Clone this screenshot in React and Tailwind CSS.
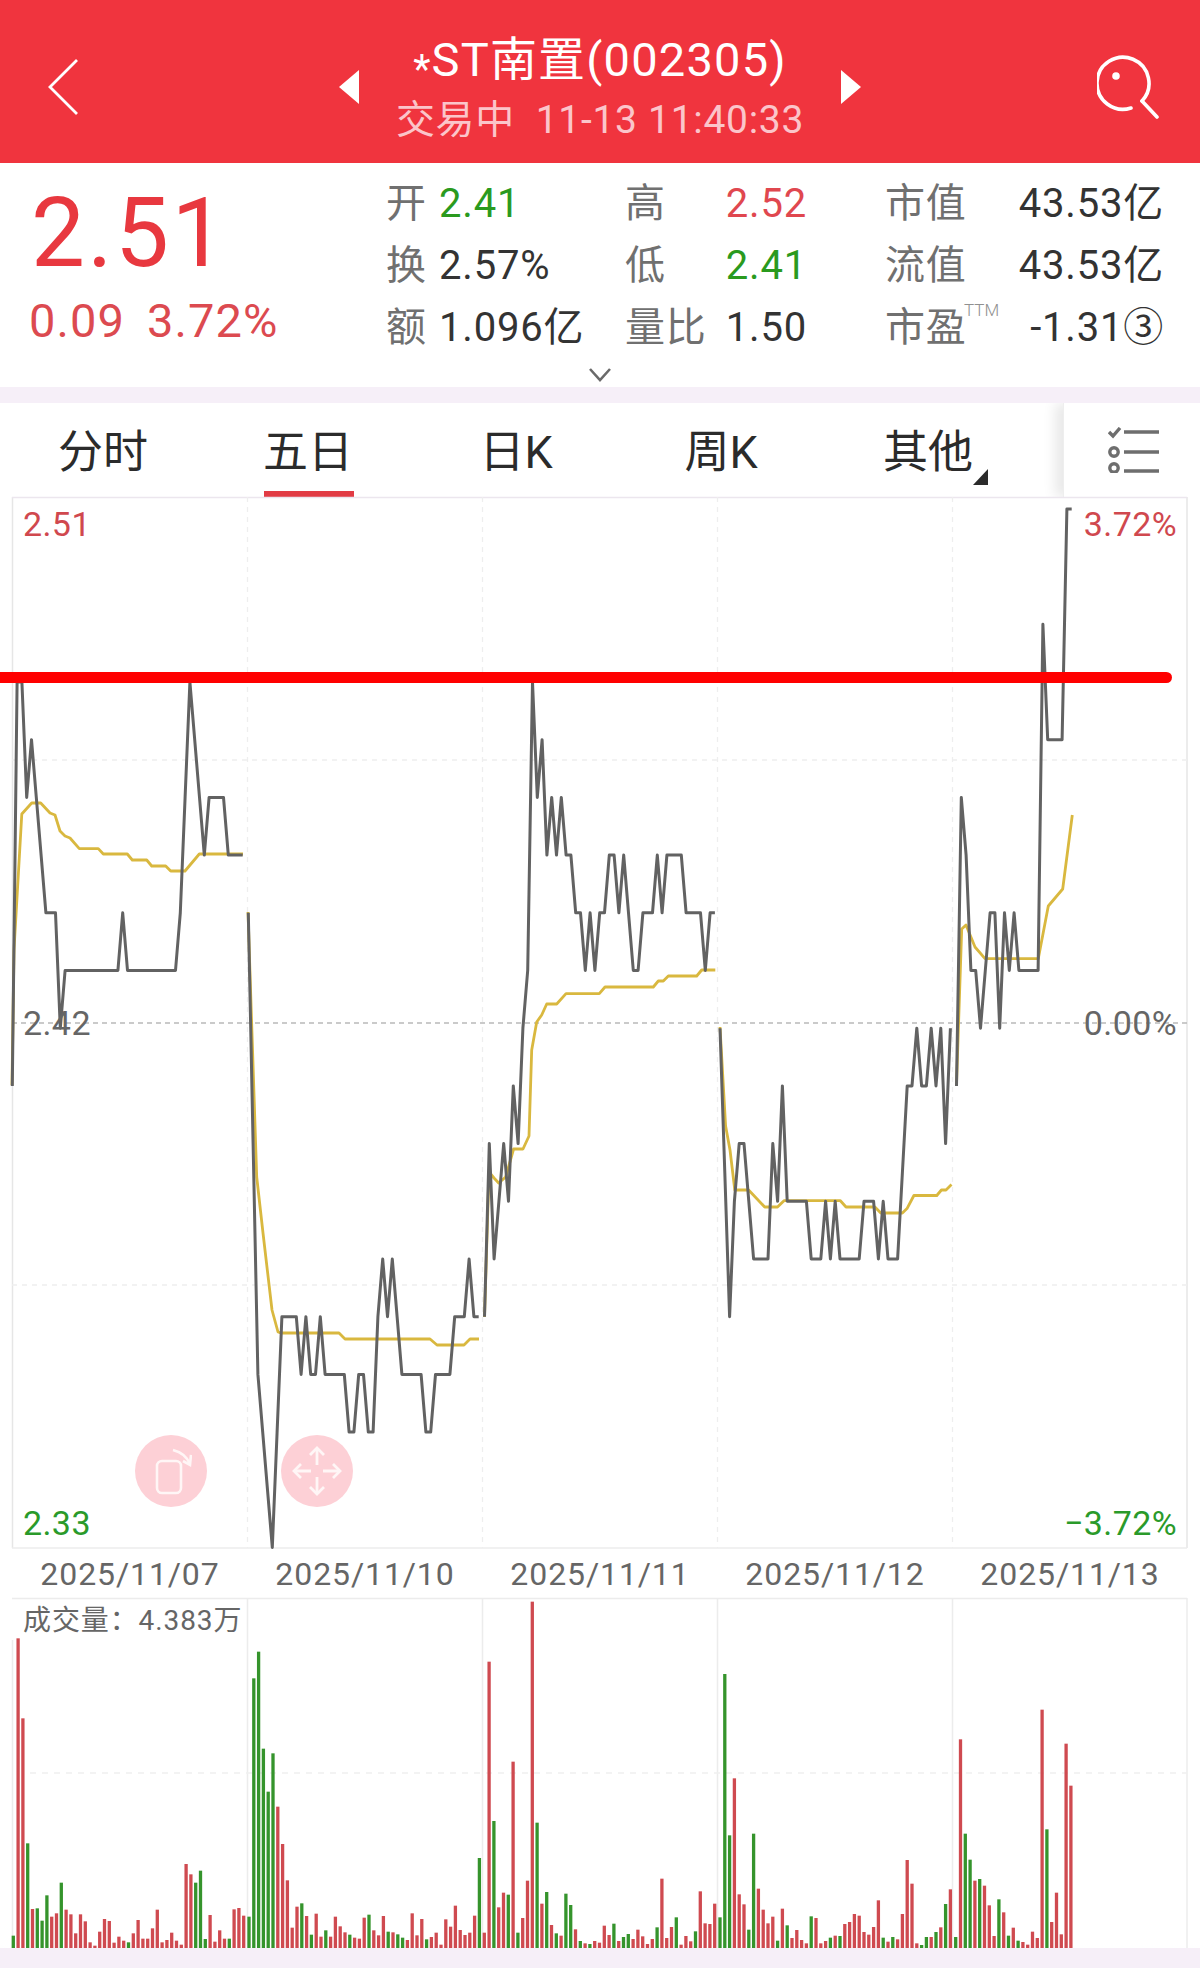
import React from "react";

const FONT = "[font-family:Roboto,'Noto_Sans_CJK_SC',sans-serif]";
const Y = (l) => 1547.5 - 57.7 * l;

const DAY_LINES = [
  { x0: 12.3, l: [8,15,15,13,14,13,12,11,11,11,9,10,10,10,10,10,10,10,10,10,10,10,10,11,10,10,10,10,10,10,10,10,10,10,10,11,13,15,14,13,12,13,13,13,13,12,12,12,12] },
  { x0: 248.3, l: [11,7,3,2,1,0,2,4,4,4,4,3,4,3,3,4,3,3,3,3,3,2,2,3,3,2,2,4,5,4,5,4,3,3,3,3,3,2,2,3,3,3,3,4,4,4,5,4,4] },
  { x0: 484.5, l: [4,7,5,6,7,6,8,7,9,10,15,13,14,12,13,12,13,12,12,11,11,10,11,10,11,11,12,12,11,12,11,10,10,11,11,11,12,11,12,12,12,12,11,11,11,11,10,11,11] },
  { x0: 720, l: [9,6.5,4,6,7,7,6,5,5,5,5,7,6,8,6,6,6,6,6,5,5,5,6,5,6,5,5,5,5,5,6,6,6,5,6,5,5,5,6.5,8,8,9,8,8,9,8,9,7,9] },
  { x0: 956.5, l: [8,13,12,10,10,9,10,11,11,9,11,10,11,10,10,10,10,10,16,14,14,14,14,18,18] },
];

const AVG_LINES = [
  [[12,1085],[14,950],[21.8,814],[31.7,803],[40.7,803],[50,813],[55,815],[60,831],[65,836],[70,838],[79.3,848.6],[98.3,848.6],[103.3,854],[127.3,854],[132.3,860],[146.7,860],[151.7,866],[165.7,866],[170.7,871],[185,871],[199.3,854],[243,854]],
  [[248,912],[256.7,1177],[263,1233],[272,1310],[278,1332],[281,1333],[339,1333],[345,1339],[430,1339],[437,1345],[464,1345],[470,1339],[479,1339]],
  [[484.5,1317],[489,1172],[494,1178],[498.7,1183],[505.7,1177],[513.6,1149],[523,1149],[529,1136],[531.7,1050],[536.7,1022],[541.7,1015],[546.7,1004],[556.7,1004],[566,993.6],[599.3,993.6],[605,987],[653.3,987],[658.3,981],[663.3,981],[668.3,976],[696.7,976],[701.7,970],[715.3,970]],
  [[720,1027],[725.6,1126],[730,1150],[734.8,1190],[748.6,1190],[764.7,1207],[777.5,1207],[784,1200.7],[840.4,1200.7],[846,1207],[874.9,1207],[880.8,1213],[902.4,1213],[907,1208.6],[913.9,1195.5],[936.8,1195.5],[941.4,1190],[946,1190],[951.5,1184.5]],
  [[956.5,1085],[961.7,929],[966,925],[975,947],[985,958.6],[1038.3,958.6],[1048.3,906],[1062.7,889],[1072.3,815]],
];

const BARS = [
  { x0: 13.3, c: "GRRGRGGGRRGRRRRRRRRRRRRRGRRRRRRRRRRRRRGGGRRRRGRRR", t: [1037,145,385,760,957,955,992,916,980,970,878,959,973,1030,973,994,1057,1067,1025,987,993,1058,1040,1052,1057,1030,990,1046,1046,1015,959,1057,1050,1028,1052,1064,822,853,878,842,1047,975,1055,1021,1046,1046,958,954,977] },
  { x0: 249, c: "GGGGGGRRRRRGRGRRGRRRRGRRRGRRRGRGGRRRRGRRRRRRRRRRG", t: [980,265,185,476,605,490,650,762,871,1013,950,940,978,1034,971,1040,1021,1040,980,1009,1027,1034,1043,1046,983,974,1021,1036,978,1025,1027,1033,1043,1050,970,1036,987,1048,1041,1028,1064,988,1010,947,1020,1035,1028,977,804] },
  { x0: 484.3, c: "RRGRRGRGRRRGRGRGRGGRGRGRRRRGRGGRRRRRGRRRGRRRGRRR", t: [1028,215,693,952,908,914,515,1028,984,872,35,698,941,906,1005,1030,1037,911,945,1018,1053,1060,1062,1053,1058,1007,1035,1001,1053,1041,1032,1047,1019,1039,1062,1047,1012,866,1044,1011,982,1064,1038,1054,1024,904,1000,1002,941] },
  { x0: 720, c: "GGGRRRGGRRRRGRGRRRRGRRRGRGRRRRRRRRGRGRRRRRGGRGRGR", t: [982,252,736,565,913,943,1019,731,896,959,1000,980,1052,956,1006,1044,1020,1050,1060,979,984,1060,1053,1043,1037,1038,1002,996,972,977,1026,1034,1011,931,1043,1055,1041,1048,972,810,881,1060,1065,1041,1041,1026,1012,942,898] },
  { x0: 955.7, c: "GRGGRGRRRGRGRGRRRRRGRRRRR", t: [1041,448,731,809,872,867,887,946,1038,928,967,1037,1013,1052,1056,1064,1025,1044,359,718,996,908,1033,461,587] },
];

const GRID_X = [247.5, 482.5, 717.5, 952.5];

function PriceChart() {
  return (
    <svg className="absolute inset-0 overflow-visible" width="1200" height="1051" viewBox="0 497 1200 1051">
      <g stroke="#e6e6e6" strokeWidth="1.5">
        <line x1="12.5" y1="497" x2="12.5" y2="1548" />
        <line x1="1187" y1="497" x2="1187" y2="1548" />
        <line x1="12" y1="497.5" x2="1187" y2="497.5" stroke="#ece6ee" />
        <line x1="12" y1="1548" x2="1187" y2="1548" stroke="#ececec" />
      </g>
      <g stroke="#eeeeee" strokeWidth="1.3" strokeDasharray="5 5">
        {GRID_X.map((x) => <line key={x} x1={x} y1="497" x2={x} y2="1548" />)}
        <line x1="12" y1="760" x2="1187" y2="760" />
        <line x1="12" y1="1285" x2="1187" y2="1285" />
      </g>
      <line x1="12" y1="1023" x2="1187" y2="1023" stroke="#b9b9b9" strokeWidth="1.6" strokeDasharray="5 4" />
      {AVG_LINES.map((pts, i) => (
        <polyline key={i} fill="none" stroke="#d9b83f" strokeWidth="2.8" strokeLinejoin="round" points={pts.map((p) => p.join(",")).join(" ")} />
      ))}
      {DAY_LINES.map((d, i) => (
        <polyline key={i} fill="none" stroke="#626262" strokeWidth="3" strokeLinejoin="round" points={d.l.map((l, j) => `${(d.x0 + j * 4.8).toFixed(1)},${Y(l).toFixed(1)}`).join(" ")} />
      ))}
      <line x1="0" y1="677.5" x2="1166" y2="677.5" stroke="#ff0000" strokeWidth="11" />
      <circle cx="1166.5" cy="677.5" r="5.5" fill="#ff0000" />
    </svg>
  );
}

function VolumeChart() {
  return (
    <svg className="absolute inset-0 overflow-visible" width="1200" height="350" viewBox="0 1598 1200 350">
      <g stroke="#ececec" strokeWidth="1.5">
        <line x1="12.5" y1="1640" x2="12.5" y2="1948" />
        <line x1="1187" y1="1598" x2="1187" y2="1948" />
        <line x1="12" y1="1598.5" x2="1187" y2="1598.5" />
        {GRID_X.map((x) => <line key={x} x1={x} y1="1598" x2={x} y2="1948" />)}
      </g>
      <line x1="30" y1="1773" x2="1187" y2="1773" stroke="#efefef" strokeWidth="1.5" strokeDasharray="6 6" />
      {BARS.flatMap((d, i) =>
        d.t.map((t, j) => {
          const top = 1590 + t / 3;
          return (
            <rect key={`${i}-${j}`} x={d.x0 + j * 4.8 - 1.65} y={top} width="3.3" height={1948 - top} fill={d.c[j] === "G" ? "#35942c" : "#cf4a50"} />
          );
        })
      )}
    </svg>
  );
}

function Stat({ label, value, cls, labelCls = "", valueCls = "text-[#333333]" }) {
  return (
    <div className={`flex items-center ${cls}`}>
      <span className={`text-[#707070] ${labelCls}`}>{label}</span>
      <span className={valueCls}>{value}</span>
    </div>
  );
}

function Row({ a, b, c }) {
  return (
    <div className="flex h-[62px] items-center text-[40px] leading-none tracking-[0.8px]">
      <div className="w-[239px]">{a}</div>
      <div className="w-[260px]">{b}</div>
      <div>{c}</div>
    </div>
  );
}

function Tab({ w, active, children, tri }) {
  return (
    <div className={`relative flex h-full items-center justify-center ${w} text-[45px] leading-none text-[#2b2b2b]`}>
      <span className="relative mt-[4px]">
        {children}
        {tri && (
          <svg className="absolute left-full top-[38px]" width="16" height="17" viewBox="0 0 16 17">
            <path d="M15 1V17H0Z" fill="#2b2b2b" />
          </svg>
        )}
      </span>
      {active && <div className="absolute bottom-0 left-[58px] h-[6px] w-[90px] bg-[#e23b44]" />}
    </div>
  );
}

function SideLabel({ cls, children }) {
  return <div className={`absolute text-[34px] leading-none tracking-[0.4px] ${cls}`}>{children}</div>;
}

export default function App() {
  return (
    <div className={`flex h-[1968px] w-[1200px] flex-col overflow-hidden bg-white ${FONT}`}>
      <header className="flex h-[163px] shrink-0 items-center bg-[#f0343e] pl-[47px] pr-[41px] pt-[10px] text-white">
        <svg width="33" height="56" viewBox="0 0 33 56" fill="none" stroke="#ffffff" strokeWidth="2.8">
          <path d="M30 1 3 28l27 27" />
        </svg>
        <div className="ml-[259px] flex w-[522px] items-center justify-between">
          <svg width="20" height="34" viewBox="0 0 20 34"><path d="M20 0V34L0 17Z" fill="#ffffff" /></svg>
          <div className="flex flex-col items-center pt-[11px]">
            <div className="whitespace-nowrap text-[47px] leading-[54px] tracking-[1.2px]">
              <span className="relative top-[7px] text-[40px]">*</span>ST南置(002305)
            </div>
            <div className="whitespace-nowrap text-[39px] leading-[61px] tracking-[0.7px] text-[#fbc5ca]">交易中&nbsp;&nbsp;11-13 11:40:33</div>
          </div>
          <svg width="20" height="34" viewBox="0 0 20 34"><path d="M0 0V34L20 17Z" fill="#ffffff" /></svg>
        </div>
        <svg className="ml-auto" width="62" height="64" viewBox="0 0 62 64" fill="none" stroke="#ffffff" strokeWidth="3.6" strokeLinecap="round">
          <path d="M45 46A26 26 0 1 0 34 53" />
          <path d="M45 46 60 62" />
          <circle cx="19" cy="21" r="3.8" fill="#ffffff" stroke="none" />
        </svg>
      </header>

      <section className="relative flex h-[224px] shrink-0">
        <div className="w-[386px] shrink-0 pl-[31px] pt-[20px]">
          <div className="text-[96px] leading-[100px] tracking-[2.4px] text-[#e8383f]">2.51</div>
          <div className="-ml-[2px] mt-[10px] flex text-[47px] leading-[56px] tracking-[1.1px] text-[#dc4a50]">
            <span className="mr-[22px]">0.09</span>
            <span>3.72%</span>
          </div>
        </div>
        <div className="pt-[10px]">
          <Row
            a={<Stat label="开" value="2.41" labelCls="w-[53px]" valueCls="text-[#2a9a1e]" />}
            b={<Stat label="高" value="2.52" cls="w-[182px] justify-between" valueCls="text-[#e0474f]" />}
            c={<Stat label="市值" value="43.53亿" cls="w-[279px] justify-between" />}
          />
          <Row
            a={<Stat label="换" value="2.57%" labelCls="w-[53px]" />}
            b={<Stat label="低" value="2.41" cls="w-[182px] justify-between" valueCls="text-[#2a9a1e]" />}
            c={<Stat label="流值" value="43.53亿" cls="w-[279px] justify-between" />}
          />
          <Row
            a={<Stat label="额" value="1.096亿" labelCls="w-[53px]" />}
            b={<Stat label="量比" value="1.50" cls="w-[182px] justify-between" />}
            c={
              <div className="relative flex w-[279px] items-center justify-between">
                <span className="text-[#707070]">市盈</span>
                <span className="text-[#333333]">-1.31③</span>
                <span className="absolute left-[79px] top-[-6px] text-[17px] font-light tracking-normal text-[#909090]">TTM</span>
              </div>
            }
          />
        </div>
        <svg className="absolute left-[588px] top-[205px]" width="24" height="14" viewBox="0 0 24 14" fill="none" stroke="#6a6a6a" strokeWidth="2.6">
          <path d="M2 1l10 11L22 1" />
        </svg>
      </section>

      <div className="h-[16px] shrink-0 bg-[#f6eff8]" />

      <nav className="flex h-[94px] shrink-0 overflow-hidden">
        <Tab w="w-[206px]">分时</Tab>
        <Tab w="w-[204px]" active>五日</Tab>
        <Tab w="w-[212px]">日K</Tab>
        <Tab w="w-[198px]">周K</Tab>
        <Tab w="w-[216px]" tri>其他</Tab>
        <div className="ml-[27px] flex flex-1 items-center justify-center border-l border-[#eeeeee] pl-[4px] shadow-[-8px_0_12px_rgba(0,0,0,0.09)]">
          <svg width="52" height="46" viewBox="0 0 52 46" fill="none" stroke="#6e6e6e" strokeWidth="3.4">
            <path d="M1 5l4 4 7-8" />
            <path d="M16 6h35M16 26h35M16 45h35" strokeWidth="3.6" transform="translate(0 -1)" />
            <circle cx="6" cy="25" r="4.2" />
            <circle cx="6" cy="44" r="4.2" transform="translate(0 -3)" />
          </svg>
        </div>
      </nav>

      <section className="relative h-[1051px] shrink-0">
        <PriceChart />
        <SideLabel cls="left-[23px] top-[10px] text-[#d0484e]">2.51</SideLabel>
        <SideLabel cls="left-[23px] top-[509px] text-[#666666]">2.42</SideLabel>
        <SideLabel cls="left-[23px] top-[1009px] text-[#2a9a2a]">2.33</SideLabel>
        <SideLabel cls="right-[23px] top-[10px] text-[#d0484e]">3.72%</SideLabel>
        <SideLabel cls="right-[23px] top-[509px] text-[#666666]">0.00%</SideLabel>
        <SideLabel cls="right-[23px] top-[1009px] text-[#2a9a2a]">−3.72%</SideLabel>
        <div className="absolute left-[135px] top-[938px] flex h-[72px] w-[72px] items-center justify-center rounded-full bg-[#fdd0d6]">
          <svg width="42" height="48" viewBox="0 0 42 48" fill="none" stroke="#fff6f6" strokeWidth="2.6">
            <rect x="7" y="14" width="24" height="32" rx="5" />
            <path d="M23 3c8 2 14 7 17 14" />
            <path d="M41 8l-1 10-7-4" />
          </svg>
        </div>
        <div className="absolute left-[281px] top-[938px] flex h-[72px] w-[72px] items-center justify-center rounded-full bg-[#fdd0d6]">
          <svg width="50" height="50" viewBox="0 0 50 50" fill="none" stroke="#fff6f6" strokeWidth="2.8">
            <path d="M25 2v17M25 31v17M2 25h17M31 25h17" />
            <path d="M18 9l7-7 7 7M18 41l7 7 7-7M9 18l-7 7 7 7M41 18l7 7-7 7" />
          </svg>
        </div>
      </section>

      <div className="flex h-[50px] shrink-0 items-center pl-[12.5px] pt-[2px] text-[32px] leading-none tracking-[0.9px] text-[#666666]">
        {["2025/11/07", "2025/11/10", "2025/11/11", "2025/11/12", "2025/11/13"].map((d) => (
          <div key={d} className="w-[235px] text-center">{d}</div>
        ))}
      </div>

      <section className="relative h-[350px] shrink-0">
        <VolumeChart />
        <div className="absolute left-[23px] top-[9px] text-[28px] leading-[28px] tracking-[0.9px] text-[#666666]">成交量：4.383万</div>
      </section>

      <div className="flex-1 bg-[#f6eff8]" />
    </div>
  );
}
